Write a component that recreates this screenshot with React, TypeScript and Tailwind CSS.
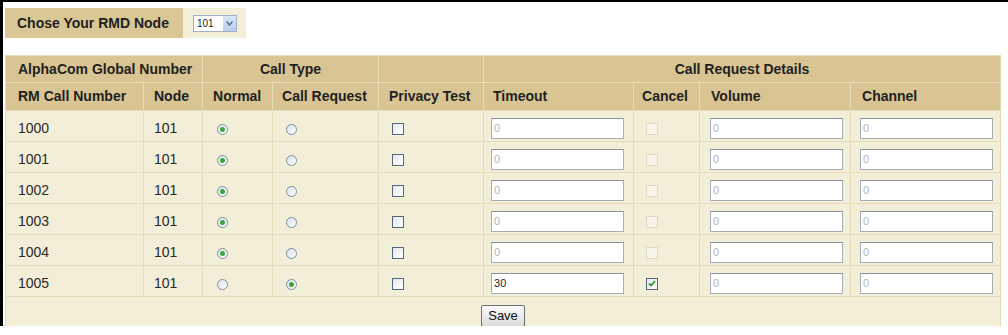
import React from 'react'

type Row = {
    num: string
    normal: boolean
    timeout: string
    cancel: boolean
}

const rows: Row[] = [
    { num: '1000', normal: true, timeout: '0', cancel: false },
    { num: '1001', normal: true, timeout: '0', cancel: false },
    { num: '1002', normal: true, timeout: '0', cancel: false },
    { num: '1003', normal: true, timeout: '0', cancel: false },
    { num: '1004', normal: true, timeout: '0', cancel: false },
    { num: '1005', normal: false, timeout: '30', cancel: true },
]

function Radio({ checked }: { checked: boolean }) {
    return (
        <span className="flex h-[11px] w-[11px] items-center justify-center rounded-full border border-[#7d8d9c] bg-gradient-to-br from-[#d9e2ec] to-[#ffffff]">
            {checked && <span className="h-[5px] w-[5px] rounded-full bg-[#3ea43e]" />}
        </span>
    )
}

function Check({ checked, disabled }: { checked?: boolean; disabled?: boolean }) {
    if (disabled) {
        return <span className="block h-[12px] w-[12px] border border-[#e0d9c4] bg-[#f7f4ea]" />
    }
    return (
        <span className="flex h-[12px] w-[12px] items-center justify-center border border-[#55687a] bg-gradient-to-br from-[#e3e8ee] to-[#ffffff]">
            {checked && (
                <svg width="8" height="7" viewBox="0 0 8 7">
                    <path d="M1 3.5 L3 5.5 L7 1" stroke="#2f9a2f" strokeWidth="1.8" fill="none" />
                </svg>
            )}
        </span>
    )
}

function TextBox({ value }: { value: string }) {
    const dim = value === '0'
    return (
        <div
            className={`flex h-[21px] w-[133px] items-center border border-[#a6adb4] border-t-[#8a939b] bg-white px-[2px] text-[11px] ${dim ? 'text-[#b4b4b4]' : 'text-[#222]'}`}
        >
            {value}
        </div>
    )
}

const th = 'whitespace-nowrap border border-[#e7dcb9] px-[10px] align-middle font-bold text-[#1f1f1f]'
const td = 'border border-[#e7dcb9] pt-[5px] align-middle'

export default function App() {
    return (
        <div
            className="h-[326px] w-[1008px] border-l-[3px] border-t-2 border-black bg-white"
            style={{ fontFamily: '"Liberation Sans", Arial, sans-serif' }}
        >
            <div className="ml-[2px] mt-[6px] flex h-[30px] w-[241px] text-[14px]">
                <div className="flex w-[178px] items-center bg-[#d9c795] pl-[12px] pt-[1px] font-bold text-[#1f1f1f]">
                    Chose Your RMD Node
                </div>
                <div className="flex flex-1 items-center bg-[#f3eed8] pl-[10px]">
                    <div className="flex h-[17px] w-[44px] items-center border border-[#9fb0c6] bg-white">
                        <span className="flex-1 pl-[3px] text-[10px] text-[#222]">101</span>
                        <span className="flex h-full w-[13px] items-center justify-center bg-gradient-to-b from-[#dce7f7] to-[#b9cdea]">
                            <svg width="7" height="5" viewBox="0 0 7 5">
                                <path d="M0.5 0.5 L3.5 4 L6.5 0.5" stroke="#4b6a9b" strokeWidth="1.4" fill="none" />
                            </svg>
                        </span>
                    </div>
                </div>
            </div>

            <table className="ml-[2px] mt-[17px] w-[995px] table-fixed border-collapse text-[14px]">
                <colgroup>
                    <col className="w-[138px]" />
                    <col className="w-[59px]" />
                    <col className="w-[70px]" />
                    <col className="w-[106px]" />
                    <col className="w-[105px]" />
                    <col className="w-[150px]" />
                    <col className="w-[66px]" />
                    <col className="w-[151px]" />
                    <col className="w-[150px]" />
                </colgroup>
                <thead className="bg-[#d8c593]">
                    <tr className="h-[27px]">
                        <th colSpan={2} className={`${th} pl-[12px] pr-0 text-left`}>
                            AlphaCom Global Number
                        </th>
                        <th colSpan={2} className={`${th} text-center`}>
                            Call Type
                        </th>
                        <th className={th}></th>
                        <th colSpan={4} className={`${th} text-center`}>
                            Call Request Details
                        </th>
                    </tr>
                    <tr className="h-[28px] text-left">
                        <th className={`${th} pl-[12px]`}>RM Call Number</th>
                        <th className={th}>Node</th>
                        <th className={th}>Normal</th>
                        <th className={`${th} pl-[9px]`}>Call Request</th>
                        <th className={th}>Privacy Test</th>
                        <th className={`${th} pl-[9px]`}>Timeout</th>
                        <th className={`${th} pl-[8px]`}>Cancel</th>
                        <th className={`${th} pl-[11px]`}>Volume</th>
                        <th className={`${th} pl-[11px]`}>Channel</th>
                    </tr>
                </thead>
                <tbody className="bg-[#f3eed8] text-[#2a2a2a]">
                    {rows.map((r) => (
                        <tr key={r.num} className="h-[31px]">
                            <td className={`${td} pl-[12px]`}>{r.num}</td>
                            <td className={`${td} pl-[10px]`}>101</td>
                            <td className={`${td} pl-[14px]`}>
                                <div className="flex pt-[1px]">
                                    <Radio checked={r.normal} />
                                </div>
                            </td>
                            <td className={`${td} pl-[13px]`}>
                                <div className="flex pt-[1px]">
                                    <Radio checked={!r.normal} />
                                </div>
                            </td>
                            <td className={`${td} pl-[13px]`}>
                                <div className="flex">
                                    <Check />
                                </div>
                            </td>
                            <td className={`${td} pl-[7px]`}>
                                <TextBox value={r.timeout} />
                            </td>
                            <td className={`${td} pl-[12px]`}>
                                <div className="flex">
                                    <Check checked={r.cancel} disabled={!r.cancel} />
                                </div>
                            </td>
                            <td className={`${td} pl-[10px]`}>
                                <TextBox value="0" />
                            </td>
                            <td className={`${td} pl-[9px]`}>
                                <TextBox value="0" />
                            </td>
                        </tr>
                    ))}
                    <tr className="h-[34px]">
                        <td colSpan={9} className={`${td} text-center`}>
                            <button className="h-[22px] rounded-[2px] border border-[#6f6f6f] bg-gradient-to-b from-[#fafafa] to-[#dcdcdc] px-[6px] text-[13px] text-[#111]">
                                Save
                            </button>
                        </td>
                    </tr>
                </tbody>
            </table>
        </div>
    )
}
